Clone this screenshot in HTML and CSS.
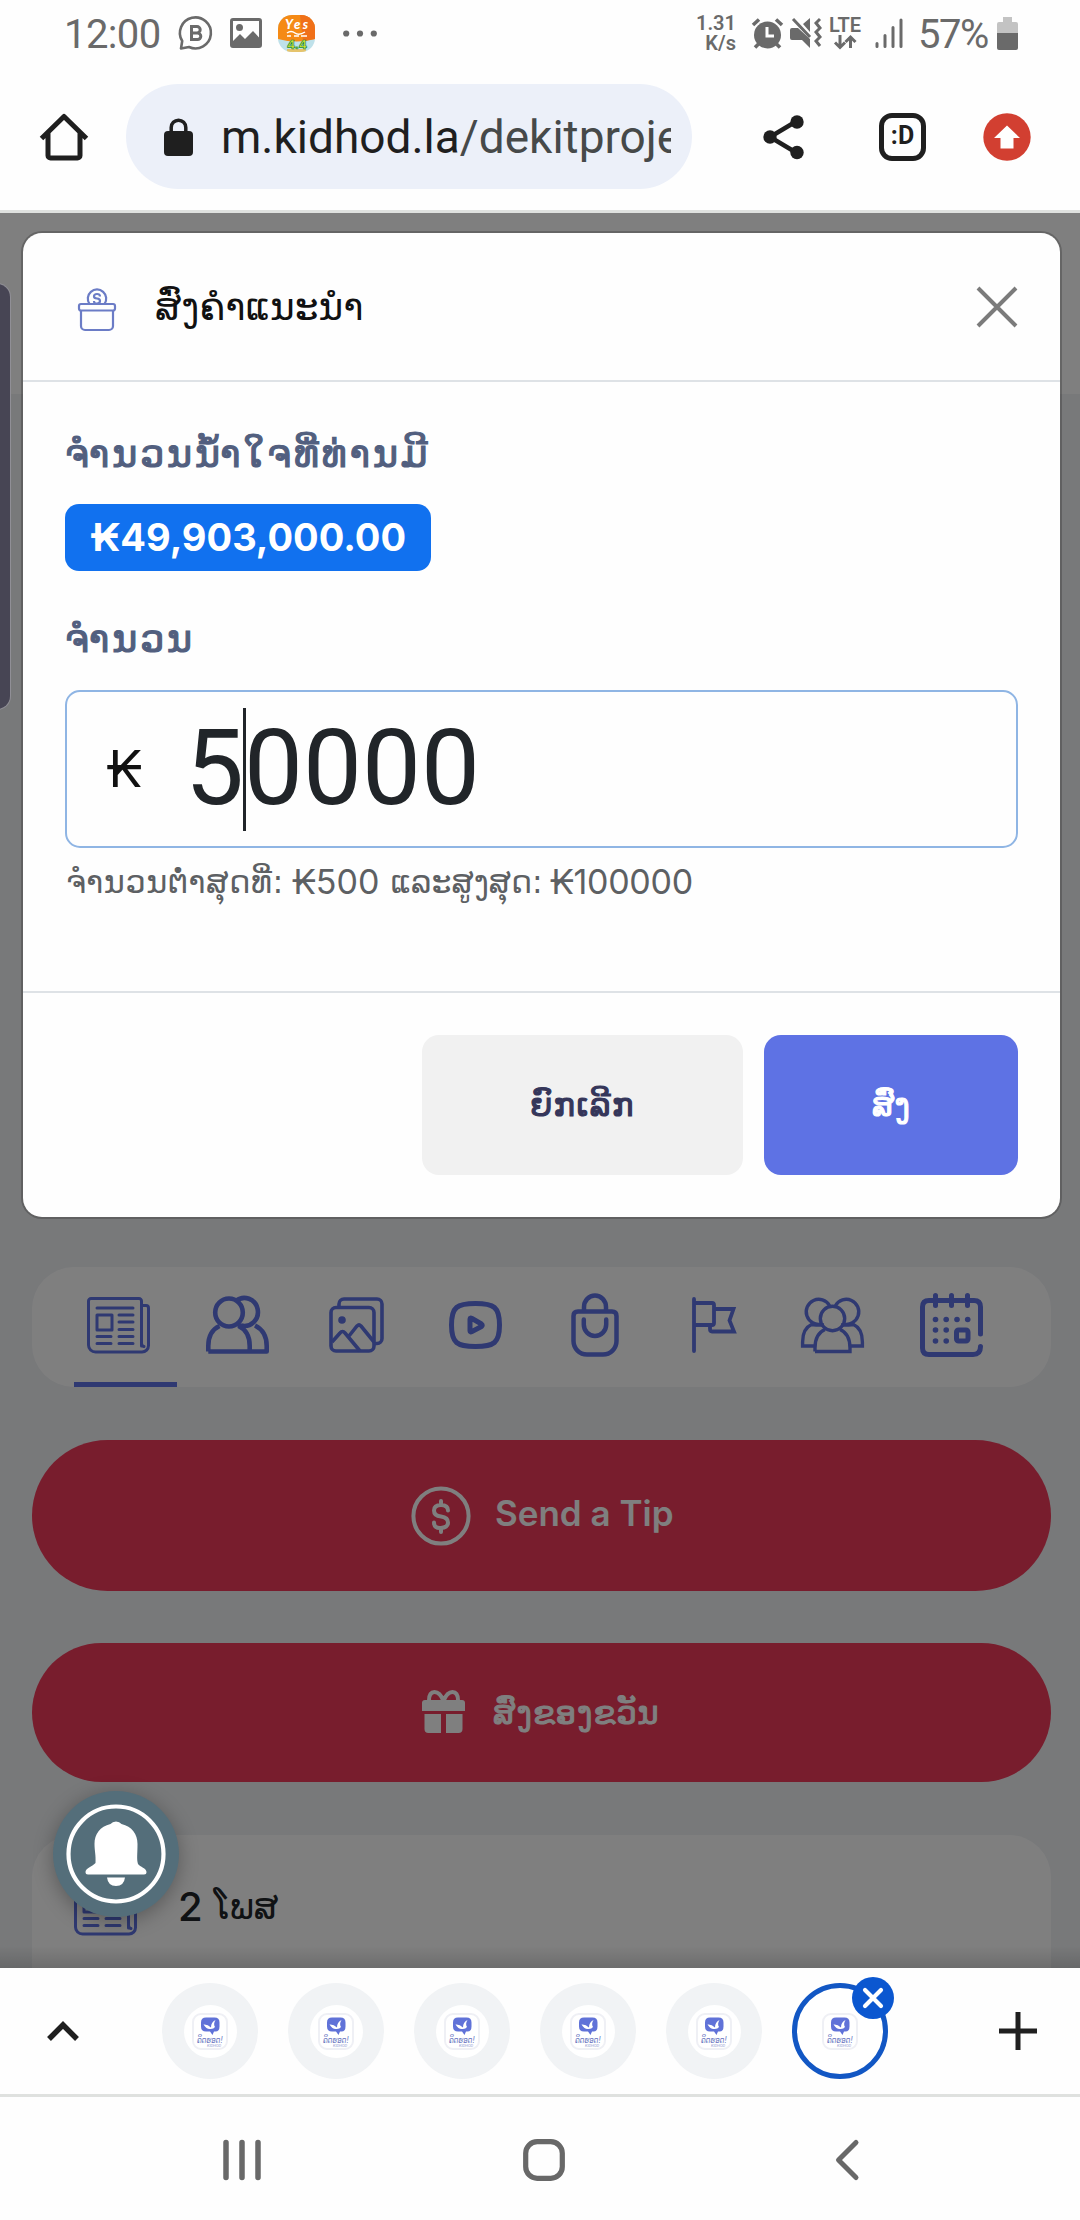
FILE: index.html
```html
<!DOCTYPE html>
<html lang="lo">
<head>
<meta charset="utf-8">
<title>m.kidhod.la</title>
<link rel="stylesheet" href="styles.css">
</head>
<body>
<svg class="defs" width="0" height="0">
  <symbol id="news" viewBox="0 0 63 57"><g fill="none" stroke="currentColor" stroke-width="3" stroke-linecap="round" stroke-linejoin="round"><path d="M54.5 49V4a2.5 2.5 0 0 0-2.5-2.5H4A2.500 2.500 0 0 0 1.500 4v44a7 7 0 0 0 7 7H55a6.500 6.500 0 0 0 6.500-6.500V11A2.500 2.500 0 0 0 59 8.500H54.500M54.500 46q0 3 2.500 3.500M10 11h36M32 18h14M32 25h14M32 32.500h14M32 39.500h14M32 46.500h14M10 39.500h14M10 46.500h14M10 18h15v15H10z"/></g></symbol>
  <symbol id="site" viewBox="0 0 36 37"><rect x="1" y="1" width="34" height="35" rx="8" fill="#fff" stroke="#eff0f5" stroke-width="2"/><path d="M14 4.500h8.500q5 0 5 5v4q0 5-4 5h-1.500L20.500 22l-2.500-3.500H14q-5 0-5-5v-4q0-5 5-5z" fill="#6072d8"/><path d="M11.500 11.500q4-.5 7.500 3 0-5.500 4.500-7.500-2.500 4-.5 7-1.500 2.500-5.500 2-3 0-6-4.500z" fill="#fff"/><text x="5" y="29.500" textLength="26" lengthAdjust="spacingAndGlyphs" font-family="DejaVu Sans" font-size="8.500" fill="#6774c0">ຄິດຮອດ!</text><text x="15" y="33.500" textLength="14" lengthAdjust="spacingAndGlyphs" font-family="Inter" font-size="3.500" fill="#8791cc">KIDHOD</text></symbol>
</svg>

<header class="status">
  <div class="group">
    <span class="clock">12:00</span>
    <svg class="st-b" width="34" height="34" viewBox="0 0 34 34" fill="none" stroke="currentColor" stroke-width="2.600"><path d="M2 32.500 3.200 25A15.500 15.500 0 1 1 10 31z" stroke-linejoin="round"/><path d="M12.500 10.500h5.500a3.200 3.200 0 0 1 0 6.400h-5.500zM12.500 17h6a3.300 3.300 0 0 1 0 6.600h-6z" stroke-width="3"/></svg>
    <svg class="st-pic" width="32" height="30" viewBox="0 0 32 30"><path fill="currentColor" fill-rule="evenodd" d="M3 0h26a3 3 0 0 1 3 3v24a3 3 0 0 1-3 3H3a3 3 0 0 1-3-3V3a3 3 0 0 1 3-3zM3 3v20l7-7 5 5 8-8 6 6.500V3zM9.500 6a3.500 3.500 0 1 1 0 7 3.500 3.500 0 0 1 0-7z"/></svg>
    <svg class="st-app" width="37" height="37" viewBox="0 0 37 37"><defs><clipPath id="appclip"><rect width="37" height="37" rx="14"/></clipPath></defs><g clip-path="url(#appclip)"><rect width="37" height="37" fill="#bfe1ea"/><path d="M0 0h37v24q-18 5-37 0z" fill="#f58a15"/><path d="M22 0h15v24l-12 2z" fill="#f07019"/><path d="M9 34h19v3H9z" fill="#e6c46c"/></g><text x="7" y="14" font-family="Lato" font-weight="900" font-style="italic" font-size="13" textLength="23" fill="#fff">Yes</text><path d="M9 18q4-3 8 0t10-1M9 21h4m3 0h5m2 0h6" stroke="#fff" stroke-width="1.500" fill="none"/><text x="9" y="34" font-family="Inter" font-weight="800" font-size="12" textLength="20" fill="#d8e62e" stroke="#178a4a" stroke-width=".7">4.4</text></svg>
    <svg class="st-dots" width="34" height="7" viewBox="0 0 34 7" fill="currentColor"><circle cx="3.200" cy="3.500" r="3.100"/><circle cx="17" cy="3.500" r="3.100"/><circle cx="30.800" cy="3.500" r="3.100"/></svg>
  </div>
  <div class="group">
    <div class="rate"><span>1.31</span><span>K/s</span></div>
    <svg class="st-alarm" width="33" height="32" viewBox="0 0 33 32"><circle cx="16.500" cy="18" r="13.500" fill="currentColor"/><path d="M2 8l6-5.500M31 8l-6-5.500M4 30.500l4-4M29 30.500l-4-4" stroke="currentColor" stroke-width="3.600"/><path d="M16 10v9h7" fill="none" stroke="#fff" stroke-width="3"/></svg>
    <svg class="st-mute" width="31" height="32" viewBox="0 0 31 32"><path fill="currentColor" d="M2 11h6L20 22v9l-8-8H2a2 2 0 0 1-2-2v-8a2 2 0 0 1 2-2zM13 7l7-6v14z"/><path d="M3 2l17 18M30 2l-4 4 4 5-4 4 4 5-4 4 4 5" fill="none" stroke="currentColor" stroke-width="3"/></svg>
    <div class="lte"><span>LTE</span><svg width="22" height="14" viewBox="0 0 22 14" fill="none" stroke="currentColor" stroke-width="3"><path d="M6 0v12M1 7.500l5 5 5-5M16.500 13V2M11.500 7l5-5 5 5"/></svg></div>
    <svg class="st-sig" width="28" height="30" viewBox="0 0 28 30" stroke="currentColor" stroke-width="3" stroke-linecap="round"><path d="M2 25.500v3M10 17.500v11M18 9.500v19M26 2v26.500"/></svg>
    <span class="pct">57%</span>
    <svg class="st-bat" width="21" height="33" viewBox="0 0 21 33"><path d="M6 0h9v5h4a2 2 0 0 1 2 2v9H0V7a2 2 0 0 1 2-2h4z" fill="#c3c3c3"/><path d="M0 16h21v15a2 2 0 0 1-2 2H2a2 2 0 0 1-2-2z" fill="currentColor"/></svg>
  </div>
</header>

<div class="toolbar">
  <svg class="home" width="48" height="48" viewBox="0 0 48 48" fill="none" stroke="currentColor" stroke-width="5"><path d="M1.500 25.500 24 3.500l22.500 22M8 20v22.500a2.500 2.500 0 0 0 2.500 2.500h27a2.500 2.500 0 0 0 2.500-2.500V20" stroke-linejoin="round"/></svg>
  <div class="omnibox">
    <svg width="29" height="38" viewBox="0 0 29 38"><rect y="13" width="29" height="25" rx="4" fill="currentColor"/><path d="M7.200 15V9.500a7.300 7.300 0 0 1 14.600 0V15" fill="none" stroke="currentColor" stroke-width="3.500"/></svg>
    <div class="url"><span class="host">m.kidhod.la</span><span class="path">/dekitproje</span></div>
  </div>
  <svg class="share" width="42" height="46" viewBox="0 0 42 46"><path d="M33 7.500 7 23l26 15.500" fill="none" stroke="currentColor" stroke-width="4.500"/><g fill="currentColor"><circle cx="34" cy="8" r="6.700"/><circle cx="7" cy="23" r="6.700"/><circle cx="34" cy="38.500" r="6.700"/></g></svg>
  <div class="tabcount">:D</div>
  <svg class="update" width="48" height="48" viewBox="0 0 48 48"><circle cx="24" cy="24" r="23.700" fill="#d23f31"/><path d="M24 12.500l13 12.500h-6.500v10.500h-13V25H11z" fill="#fff"/></svg>
</div>

<main class="page">
  <section class="hero"></section>
  <nav class="tabs">
    <a class="tab active"><svg width="63" height="57"><use href="#news"/></svg></a>
    <a class="tab"><svg width="63" height="58" viewBox="0 0 63 58" fill="none" stroke="currentColor" stroke-width="4.600" stroke-linejoin="round"><ellipse cx="23" cy="16.500" rx="13.800" ry="14"/><path d="M30 5A13.500 14 0 1 1 35 29.500M2.300 55.500V50C2.300 40 7 33 13.500 30M32.500 30C39 33 43.700 40 43.700 50v5.500M49 29.500C56 33 60.700 40 60.700 50v5.500H2.300M32 29l6 2"/></svg></a>
    <a class="tab"><svg width="55" height="56" viewBox="0 0 55 56" fill="none" stroke="currentColor" stroke-width="3.600"><rect x="2" y="10.500" width="43" height="43.500" rx="5"/><path d="M10 10V7a5 5 0 0 1 5-5h33a5 5 0 0 1 5 5v34.500a5 5 0 0 1-5 5h-2M3 45l8-9q2.500-3 5 0l15 18M20 39l8-10q2-2 4 0l13 16"/><circle cx="13" cy="23" r="3.800" fill="currentColor" stroke="none"/></svg></a>
    <a class="tab"><svg width="53" height="48" viewBox="0 0 53 48" fill="none" stroke="currentColor" stroke-width="5" stroke-linejoin="round"><path d="M26.500 2.500C45 2.500 50.500 6 50.500 24S45 45.500 26.500 45.500 2.500 42 2.500 24 8 2.500 26.500 2.500z"/><path d="M21 18v12q0 1.500 2 .5l9.500-5q1.500-1.500 0-2.500L23 17.500q-2-1-2 .5z"/></svg></a>
    <a class="tab"><svg width="48" height="64" viewBox="0 0 48 64" fill="none" stroke="currentColor" stroke-width="4.500" stroke-linecap="round"><path d="M7 18.500h34q4.500 0 4.500 4.500v25A13.500 13.500 0 0 1 32 61.500H16A13.500 13.500 0 0 1 2.500 48V23q0-4.500 4.500-4.500zM13 18v-4a11 11.500 0 0 1 22 0v4M12.800 26.500v5a11.200 11.500 0 0 0 22.400 0v-5"/></svg></a>
    <a class="tab"><svg width="44" height="56" viewBox="0 0 44 56" fill="none" stroke="currentColor" stroke-width="3.800" stroke-linecap="round"><path d="M2 2v52M2 6h18q2 0 2 2v18q0 2-2 2H2M23 12h18.500L37.500 23.500 42 34.500H20q-2 0-2-2.500v-2"/></svg></a>
    <a class="tab"><svg width="63" height="55" viewBox="0 0 63 55" fill="none" stroke="currentColor" stroke-width="3.400"><circle cx="31.500" cy="20.500" r="12.200"/><path d="M13.500 48H1.600V44C1.600 35 5 29 10.500 26.500Q14 27 23 27M49.500 48H61.400V44C61.400 35 58 29 52.500 26.500Q49 27 40 27M14 53.500V50C14 40 18 34 24 31.500M39 31.500C45 34 49 40 49 50v3.500H14M20.500 26A12.500 12.500 0 1 1 28.500 7.500M42.500 26A12.500 12.500 0 1 0 34.500 7.500"/></svg></a>
    <a class="tab"><svg width="63" height="64" viewBox="0 0 63 64" fill="none" stroke="currentColor" stroke-width="5" stroke-linecap="round"><path d="M60.500 41V14q0-6.500-6.500-6.500H9Q2.500 7.500 2.500 14v41q0 6.500 6.500 6.500h44q7.500 0 7.500-8M15.500 2.500v10M31.500 2.500v10M47.500 2.500v10"/><rect x="36.500" y="37" width="11.500" height="11" rx="2"/><g fill="currentColor" stroke="none"><circle cx="15.500" cy="26.500" r="2.800"/><circle cx="26.200" cy="26.500" r="2.800"/><circle cx="37" cy="26.500" r="2.800"/><circle cx="47.700" cy="26.500" r="2.800"/><circle cx="15.500" cy="37" r="2.800"/><circle cx="26.200" cy="37" r="2.800"/><circle cx="15.500" cy="48" r="2.800"/><circle cx="26.200" cy="48" r="2.800"/></g></svg></a>
  </nav>
  <button class="cta tip"><svg width="60" height="60" viewBox="0 0 60 60" fill="none" stroke="currentColor" stroke-width="4"><circle cx="30" cy="30" r="27.600"/><path d="M37 24.500q0-5.500-7-5.500t-7 5.500 7 6q7 1 7 6t-7 5.500-7-5.500M30 15v4M30 42v4" stroke-linecap="round"/></svg><span>Send a Tip</span></button>
  <button class="cta gift"><svg width="43" height="43" viewBox="0 0 43 43"><path fill="currentColor" d="M3 10h37q3 0 3 3v8H0v-8q0-3 3-3zM2.500 24H19v19H6.500q-4 0-4-4zM24 24h16.500v15q0 4-4 4H24z"/><path d="M21.500 11Q18 2 12.500 2 7 2 7 10.500M21.500 11Q25 2 30.500 2 36 2 36 10.500" fill="none" stroke="currentColor" stroke-width="4"/></svg><span>ສົ່ງຂອງຂວັນ</span></button>
  <section class="posts"><svg width="63" height="57"><use href="#news"/></svg><h2><span class="num">2</span> <span class="word">ໂພສ</span></h2></section>
  <div class="backdrop"></div>
  <div class="drawer"></div>
  <div class="bell"><svg width="100" height="100" viewBox="0 0 100 100"><circle cx="50" cy="50" r="47.500" fill="none" stroke="#fff" stroke-width="4.200"/><path fill="#fff" d="M50 17.500q3.500 0 5.500 2.500C66 22.500 71.500 30 71.500 40c0 10-1 15 .5 20 2 3 8.500 4 8.500 8q0 2.500-2.500 2.500H22Q19.500 70.500 19.500 68c0-4 6.500-5 10-9 .5-8-1-12-1-19 0-10 5.500-17.500 16-20q2-2.500 5.500-2.500zM41 73.500h18q-1 8.500-9 8.500t-9-8.500z"/></svg></div>

  <section class="modal">
    <header class="modal-head">
      <svg class="box" width="38" height="42" viewBox="0 0 38 42" fill="none" stroke="#6b7cc6" stroke-width="2.200"><rect x="1" y="15" width="36" height="6.500" rx="2"/><path d="M3 22v15a4 4 0 0 0 4 4h24a4 4 0 0 0 4-4V22M11.500 15A9.200 9.200 0 1 1 26.500 15"/><path d="M22 7.500Q22 5 19 5T16 7.500q0 1.800 3 2t3 2.500-3 2.500-3-2.500"/></svg>
      <h1>ສົ່ງຄຳແນະນຳ</h1>
      <svg class="close" width="42" height="42" viewBox="0 0 42 42"><path d="M2 2l38 38M40 2L2 40" stroke="#7b7b7b" stroke-width="4"/></svg>
    </header>
    <div class="modal-body">
      <div class="label l1"><span>ຈຳນວນນ້ຳໃຈທີ່ທ່ານມີ</span></div>
      <div class="badge"><span>₭49,903,000.00</span></div>
      <div class="label l2"><span>ຈຳນວນ</span></div>
      <div class="field"><span class="kip">₭</span><span class="amount">5<i class="caret"></i>0000</span></div>
      <p class="hint"><span class="h1">ຈຳນວນຕ່ຳສຸດທີ່:</span><span class="h2">₭500</span><span class="h3">ແລະສູງສຸດ:</span><span class="h4">₭100000</span></p>
    </div>
    <footer class="modal-foot">
      <button class="btn cancel"><span>ຍົກເລີກ</span></button>
      <button class="btn send"><span>ສົ່ງ</span></button>
    </footer>
  </section>
</main>

<div class="strip">
  <svg class="chev" width="32" height="20" viewBox="0 0 32 20"><path d="M2 18 16 4l14 14" fill="none" stroke="currentColor" stroke-width="5.500"/></svg>
  <div class="sites">
    <div class="site"><i><svg width="36" height="37"><use href="#site"/></svg></i></div>
    <div class="site"><i><svg width="36" height="37"><use href="#site"/></svg></i></div>
    <div class="site"><i><svg width="36" height="37"><use href="#site"/></svg></i></div>
    <div class="site"><i><svg width="36" height="37"><use href="#site"/></svg></i></div>
    <div class="site"><i><svg width="36" height="37"><use href="#site"/></svg></i></div>
    <div class="site current"><i><svg width="36" height="37"><use href="#site"/></svg></i><b><svg width="22" height="22" viewBox="0 0 22 22"><path d="M3 3l16 16M19 3L3 19" stroke="#fff" stroke-width="4.200" stroke-linecap="round"/></svg></b></div>
  </div>
  <svg class="plus" width="38" height="38" viewBox="0 0 38 38"><path d="M19 0v38M0 19h38" stroke="currentColor" stroke-width="5"/></svg>
</div>
<nav class="sysnav">
  <svg width="38" height="42" viewBox="0 0 38 42"><path d="M3 3.500v35M19 3.500v35M35 3.500v35" stroke="currentColor" stroke-width="5.500" stroke-linecap="round"/></svg>
  <svg width="42" height="42" viewBox="0 0 42 42"><rect x="2.700" y="2.700" width="36.600" height="36.600" rx="11.500" fill="none" stroke="currentColor" stroke-width="5.200"/></svg>
  <svg class="back" width="24" height="42" viewBox="0 0 24 42"><path d="M21 3.500 3.500 21 21 38.500" fill="none" stroke="currentColor" stroke-width="5" stroke-linecap="round" stroke-linejoin="round"/></svg>
</nav>
</body>
</html>
```
FILE: styles.css
```css
* { box-sizing: border-box; margin: 0; }
body { width: 1080px; height: 2220px; display: flex; flex-direction: column; background: #fefefe; font-family: Roboto, "DejaVu Sans", sans-serif; overflow: hidden; }
svg { display: block; flex: none; overflow: visible; }
.defs { position: absolute; }
button { border: 0; font: inherit; padding: 0; }
span { white-space: nowrap; }

.status { height: 66px; flex: none; display: flex; justify-content: space-between; padding: 0 62px 0 64px; color: #6a6a6a; }
.group { display: flex; align-items: center; }
.clock { font-size: 40px; line-height: 66px; width: 115px; letter-spacing: -.6px; padding-top: 3px; }
.st-pic { margin-left: 17px; }
.st-app { margin-left: 16px; }
.st-dots { margin-left: 28px; }
.rate, .lte { display: flex; flex-direction: column; font-weight: 600; font-size: 20px; line-height: 20px; }
.rate { align-items: flex-end; margin-right: 15px; }
.lte { align-items: center; margin-right: 14px; height: 37px; margin-left: 8px; }
.st-mute { margin-left: 6px; }
.st-sig { margin-right: 15px; }
.pct { font-size: 40px; line-height: 66px; letter-spacing: -1.500px; padding-top: 3px; width: 79px; }

.toolbar { height: 147px; flex: none; display: flex; align-items: center; padding: 0 49px 3px 40px; border-bottom: 3px solid #dfe1df; color: #1f1f1f; }
.omnibox { margin-left: 38px; width: 566px; height: 105px; border-radius: 53px; background: #ecf0f9; display: flex; align-items: center; padding: 0 21px 0 38px; }
.url { margin-left: 28px; flex: 1; overflow: hidden; display: flex; font-size: 46px; line-height: 74px; }
.path { color: #464949; }
.share { margin-left: 71px; }
.tabcount { margin-left: 74px; width: 48px; height: 48px; border: 5.500px solid; border-radius: 13px; font: 700 25px/36px Roboto; text-align: center; }
.update { margin-left: 57px; }

.page { position: relative; height: 1755px; flex: none; background: #f0f2f5; display: flex; flex-direction: column; padding: 0 29px 0 32px; overflow: hidden; }
.hero { height: 181px; flex: none; background: #fff; margin: 0 -29px 873px -32px; }
.tabs { height: 120px; flex: none; background: #fff; border-radius: 42px; display: flex; padding-left: 27px; color: #5e72e4; }
.tab { width: 119px; display: flex; align-items: center; justify-content: center; position: relative; padding-bottom: 4px; }
.active::after { content: ""; position: absolute; left: 15px; bottom: 0; width: 103px; height: 5px; background: #5e72e4; }
.cta { background: #f03a5a; color: #fff; display: flex; align-items: center; flex: none; }
.tip { height: 151px; margin-top: 53px; border-radius: 76px; padding-left: 379px; }
.tip span { font: 600 35px/50px Inter; margin-left: 24px; margin-bottom: 5px; }
.gift { height: 139px; margin-top: 52px; border-radius: 70px; padding-left: 390px; }
.gift svg { margin-bottom: 2px; }
.gift span { font: 400 32px/50px "DejaVu Sans"; -webkit-text-stroke: 1px; letter-spacing: 1px; margin-left: 28px; }
.posts { height: 200px; flex: none; margin-top: 53px; background: #fff; border-radius: 42px 42px 0 0; display: flex; padding: 44px 0 0 42px; color: #5e72e4; }
h2 { color: #212529; margin-left: 41px; font: 400 35px/56px "DejaVu Sans"; display: flex; gap: 11px; }
.num { font: 500 40px/56px Inter; }
.backdrop { position: absolute; inset: 0; background: linear-gradient(transparent 1733px, rgba(0,0,0,.14)), rgba(0,0,0,.5); }
.drawer { position: absolute; left: -16px; top: 71px; width: 26px; height: 425px; border-radius: 14px; background: #474554; box-shadow: 0 0 0 1px #908f96; }
.bell { position: absolute; left: 53px; top: 1578px; width: 126px; height: 126px; border-radius: 50%; background: #546e7a; display: flex; align-items: center; justify-content: center; box-shadow: 0 4px 20px rgba(0,0,0,.3); }

.modal { position: absolute; left: 23px; top: 20px; width: 1037px; height: 984px; border-radius: 19px; background: #fefefe; box-shadow: 0 0 0 2px rgba(0,0,0,.2); display: flex; flex-direction: column; }
.modal-head { height: 149px; flex: none; border-bottom: 2px solid #dee2e6; display: flex; align-items: center; padding: 0 42px 0 55px; }
.box { margin-top: 6px; }
h1 { flex: 1; margin-left: 39px; font: 400 37.500px/60px "DejaVu Sans"; color: #111; }
.modal-body { height: 611px; flex: none; border-bottom: 2px solid #dee2e6; padding: 42px 42px 0; }
.label { font: 400 38px/60px "DejaVu Sans"; -webkit-text-stroke: 1.200px; letter-spacing: 2.900px; color: #525f7f; }
.l1 { height: 60px; }
.badge { margin-top: 20px; width: 366px; height: 67px; border-radius: 14px; background: #1171ef; color: #fff; display: flex; align-items: center; justify-content: center; font: 700 38px/67px Inter; }
.l2 { margin-top: 38px; height: 60px; }
.field { margin-top: 21px; height: 158px; border: 2px solid #8fb5e4; border-radius: 15px; display: flex; align-items: center; padding-left: 39px; }
.kip { width: 79px; font: 400 51px/80px Inter; color: #111; }
.amount { font: 400 105px/152px Roboto; color: #212529; display: flex; align-items: center; }
.caret { width: 3px; height: 123px; background: #212529; margin: 0 -2px 0 -1px; }
.hint { font: 400 32px/60px "DejaVu Sans"; color: #5d6063; display: flex; margin-top: 4px; }
.h1 { margin-left: 1px; letter-spacing: .5px; }
.h2, .h4 { font-family: Inter; font-size: 34px; }
.h2 { margin: 0 11px 0 8px; }
.h3 { font-size: 31.500px; }
.h4 { margin-left: 7px; letter-spacing: -.3px; }
.modal-foot { flex: 1; display: flex; justify-content: flex-end; align-items: center; gap: 21px; padding-right: 42px; }
.btn { height: 140px; border-radius: 17px; font: 400 32px/50px "DejaVu Sans"; -webkit-text-stroke: 1.200px; }
.cancel { width: 321px; background: #f1f1f1; color: #35365a; letter-spacing: 1.400px; }
.send { width: 254px; background: #5e72e4; color: #fff; }

.strip { height: 129px; flex: none; border-bottom: 3px solid #dfe1df; display: flex; align-items: center; padding: 0 43px 0 47px; color: #1f1f1f; }
.sites { display: flex; gap: 30px; margin-left: 83px; flex: 1; }
.site { width: 96px; height: 96px; border-radius: 50%; background: #f1f3f5; display: flex; align-items: center; justify-content: center; position: relative; }
.site i { width: 53px; height: 53px; border-radius: 50%; background: #fff; display: flex; align-items: center; justify-content: center; }
.current { background: #fff; border: 5px solid #1257c4; }
.current b { position: absolute; right: -11px; top: -11px; width: 42px; height: 42px; border-radius: 50%; background: #0b57d0; display: flex; align-items: center; justify-content: center; }
.sysnav { flex: 1; display: flex; align-items: center; gap: 262px; padding: 3px 0 0 223px; color: #686868; }
.back { margin-left: 8px; }
```
